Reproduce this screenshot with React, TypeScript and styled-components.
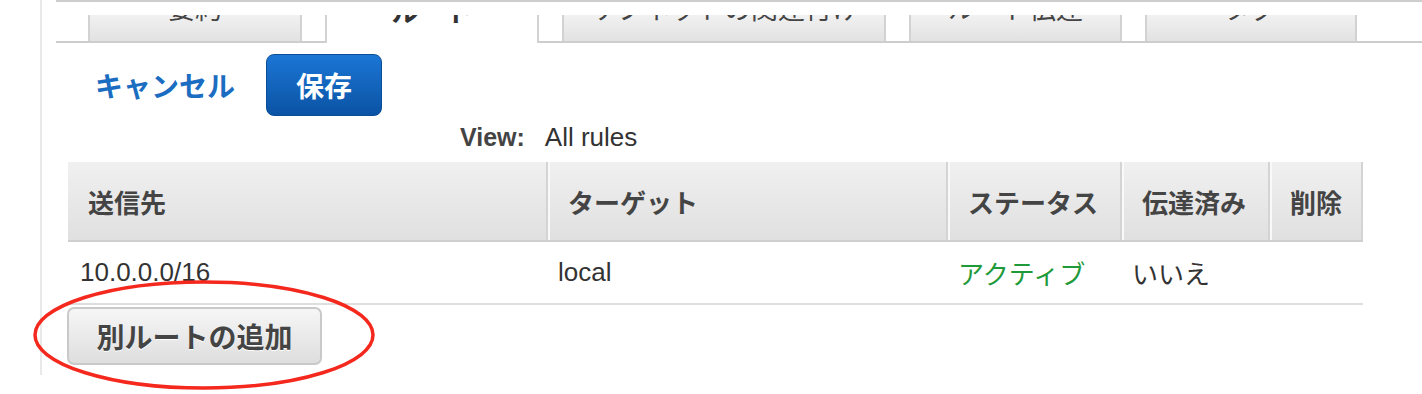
import React from 'react'
import styled, { createGlobalStyle } from 'styled-components'

const GlobalStyle = createGlobalStyle`
  html, body {
    margin: 0;
    padding: 0;
    background: #fff;
  }
  body {
    font-family: "Liberation Sans", "Noto Sans CJK JP", sans-serif;
    color: #333;
  }
`

const FONT = `"Liberation Sans", "Noto Sans CJK JP", sans-serif`

const Page = styled.div`
  padding: 0 0 19px 40px;
`

const Panel = styled.div`
  border-left: 2px solid #e9e9e9;
  padding: 0 0 10px 14px;
`

// top edge of the header that sits over the tab bar
const TopRule = styled.div`
  height: 13px;
  border-top: 2px solid #cdcdcd;
`

const TabStrip = styled.div`
  display: flex;
  gap: 23px;
  box-sizing: border-box;
  height: 28px;
  padding-left: 32px;
  border-bottom: 2px solid #cdcdcd;
`

const Tab = styled.div<{ $active?: boolean; $width: number }>`
  box-sizing: border-box;
  flex: 0 0 ${({ $width }) => $width}px;
  display: flex;
  align-items: flex-end;
  justify-content: center;
  overflow: hidden;
  border-left: 2px solid #d2d2d2;
  border-right: 2px solid #d2d2d2;
  background: ${({ $active }) => ($active ? '#fff' : 'linear-gradient(#f1f1f1, #e2e2e2)')};
  margin-bottom: ${({ $active }) => ($active ? '-2px' : '0')};
`

const TabLabel = styled.span<{ $active?: boolean }>`
  flex-shrink: 0;
  white-space: nowrap;
  font-size: 27px;
  line-height: 27px;
  padding-bottom: ${({ $active }) => ($active ? '16px' : '17px')};
  font-weight: ${({ $active }) => ($active ? 'bold' : 'normal')};
  color: ${({ $active }) => ($active ? '#333' : '#444')};
`

const ActionRow = styled.div`
  display: flex;
  align-items: center;
  gap: 31px;
  margin-top: 11px;
  padding-left: 39px;
`

const CancelLink = styled.a`
  font-size: 28px;
  font-weight: bold;
  color: #1b6dc1;
  text-decoration: none;
  cursor: pointer;
`

const PrimaryButton = styled.button`
  box-sizing: border-box;
  width: 116px;
  height: 62px;
  padding: 0;
  border: 1px solid #0a4e96;
  border-radius: 8px;
  background: linear-gradient(#1b76d4, #0b53a5);
  color: #fff;
  font: bold 28px ${FONT};
  cursor: pointer;
`

const ViewRow = styled.div`
  display: flex;
  align-items: baseline;
  gap: 20px;
  margin-top: 6px;
  padding-left: 404px;
  font-size: 26px;
  line-height: 30px;
`

const ViewLabel = styled.span`
  font-size: 25px;
  font-weight: bold;
  color: #444;
`

const Table = styled.div`
  margin: 10px 0 0 12px;
  width: 1295px;
`

const COLUMNS = '478px 400px 174px 148px 95px'

const HeadRow = styled.div`
  display: grid;
  grid-template-columns: ${COLUMNS};
  box-sizing: border-box;
  height: 80px;
  border-bottom: 2px solid #cfcfcf;
  background: linear-gradient(#f0f0f0, #e0e0e0);
`

const HeadCell = styled.div<{ $first?: boolean; $last?: boolean }>`
  box-sizing: border-box;
  display: flex;
  align-items: center;
  padding: 0 8px 0 20px;
  border-left: ${({ $first }) => ($first ? 'none' : '2px solid #d4d4d4')};
  border-right: ${({ $last }) => ($last ? '2px solid #d4d4d4' : 'none')};
  box-shadow: ${({ $first }) => ($first ? 'none' : 'inset 2px 0 0 #f9f9f9')};
  font-size: 26px;
  font-weight: bold;
  color: #444;
  white-space: nowrap;
`

const BodyRow = styled.div`
  display: grid;
  grid-template-columns: ${COLUMNS};
  box-sizing: border-box;
  height: 63px;
  border-bottom: 2px solid #dedede;
`

const BodyCell = styled.div<{ $status?: boolean }>`
  display: flex;
  align-items: center;
  padding-left: 12px;
  font-size: 26px;
  color: ${({ $status }) => ($status ? '#1f9a3a' : '#333')};
  white-space: nowrap;
`

const AddWrap = styled.div`
  position: relative;
  display: inline-block;
  margin: 2px 0 0 11px;
`

const SecondaryButton = styled.button`
  box-sizing: border-box;
  width: 255px;
  height: 58px;
  padding: 0;
  border: 2px solid #c9c9c9;
  border-radius: 7px;
  background: linear-gradient(#f6f6f6, #dedede);
  color: #444;
  font: bold 28px ${FONT};
  text-shadow: 0 1px 0 #fff;
  cursor: pointer;
`

const Annotation = styled.svg`
  position: absolute;
  left: -36px;
  top: -28px;
  pointer-events: none;
  overflow: visible;
`

const tabs = [
  { label: '要約', width: 214 },
  { label: 'ルート', width: 214, active: true },
  { label: 'サブネットの関連付け', width: 324 },
  { label: 'ルート伝達', width: 213 },
  { label: 'タグ', width: 212 },
]

const headers = ['送信先', 'ターゲット', 'ステータス', '伝達済み', '削除']

export default function App() {
  return (
    <>
      <GlobalStyle />
      <Page>
        <Panel>
          <TopRule />
          <TabStrip>
            {tabs.map(t => (
              <Tab key={t.label} $active={t.active} $width={t.width}>
                <TabLabel $active={t.active}>{t.label}</TabLabel>
              </Tab>
            ))}
          </TabStrip>

          <ActionRow>
            <CancelLink>キャンセル</CancelLink>
            <PrimaryButton>保存</PrimaryButton>
          </ActionRow>

          <ViewRow>
            <ViewLabel>View:</ViewLabel>
            <span>All rules</span>
          </ViewRow>

          <Table>
            <HeadRow>
              {headers.map((h, i) => (
                <HeadCell key={h} $first={i === 0} $last={i === headers.length - 1}>
                  {h}
                </HeadCell>
              ))}
            </HeadRow>
            <BodyRow>
              <BodyCell>10.0.0.0/16</BodyCell>
              <BodyCell>local</BodyCell>
              <BodyCell $status>アクティブ</BodyCell>
              <BodyCell>いいえ</BodyCell>
              <BodyCell />
            </BodyRow>
          </Table>

          <AddWrap>
            <SecondaryButton>別ルートの追加</SecondaryButton>
            <Annotation width="350" height="114" viewBox="0 0 350 114">
              <ellipse cx="173" cy="56" rx="169" ry="53" fill="none" stroke="#f5281d" strokeWidth="3.5" />
            </Annotation>
          </AddWrap>
        </Panel>
      </Page>
    </>
  )
}
